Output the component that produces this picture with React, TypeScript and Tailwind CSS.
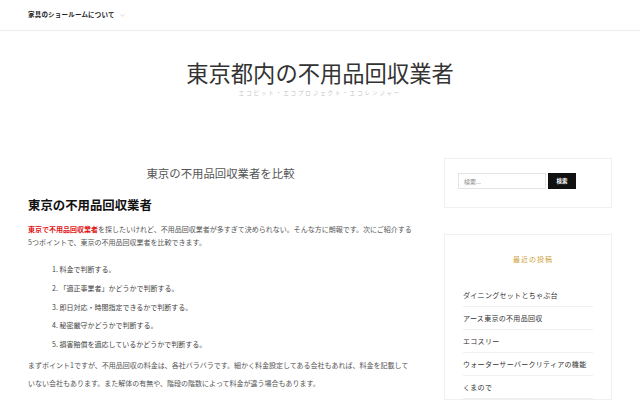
import { ChevronDown } from 'lucide-react';

const jp = { fontFamily: '"Noto Sans CJK JP", "Noto Sans", sans-serif' };

const points = [
  '1. 料金で判断する。',
  '2. 「適正事業者」かどうかで判断する。',
  '3. 即日対応・時間指定できるかで判断する。',
  '4. 秘密厳守かどうかで判断する。',
  '5. 損害賠償を適応しているかどうかで判断する。',
];

const recent = [
  'ダイニングセットとちゃぶ台',
  'アース東京の不用品回収',
  'エコスリー',
  'ウォーターサーバークリティアの機能',
  'くまので',
];

export default function App() {
  return (
    <div className="w-[640px] h-[400px] overflow-hidden bg-white text-[#333]" style={jp}>
      {/* top nav */}
      <header className="h-[31px] border-b border-[#ececec] flex items-center pl-[28px]">
        <span className="text-[6.5px] font-bold text-[#222] tracking-[0.2px]">家具のショールームについて</span>
        <ChevronDown className="w-[7px] h-[7px] ml-[4px] text-[#bbb]" strokeWidth={2} />
      </header>

      {/* site title */}
      <div className="flex flex-col items-center pt-[27px]">
        <h1 className="text-[22.3px] leading-[28px] text-[#333] font-normal">東京都内の不用品回収業者</h1>
        <p className="mt-[3px] text-[5.5px] leading-[8px] text-[#c4c4c4] tracking-[1.9px]">エコピット・エコプロジェクト・エコレンジャー</p>
      </div>

      <div className="flex pl-[28px] pt-[73px]">
        {/* main column */}
        <main className="w-[385px]">
          <h2 className="text-center text-[11.4px] leading-[16px] text-[#555] font-normal -mt-[5px]">東京の不用品回収業者を比較</h2>
          <h3 className="mt-[16px] text-[12.4px] leading-[16px] font-bold text-[#111]">東京の不用品回収業者</h3>
          <p className="mt-[10px] text-[7px] leading-[13px] text-[#555]">
            <span className="text-[#e01515] font-bold">東京で不用品回収業者</span>を探したいけれど、不用品回収業者が多すぎて決められない。そんな方に朗報です。次にご紹介する5つポイントで、東京の不用品回収業者を比較できます。
          </p>
          <ul className="mt-[14px] pl-[24px] flex flex-col gap-[6px]">
            {points.map((p) => (
              <li key={p} className="text-[7px] leading-[12.8px] text-[#444]">{p}</li>
            ))}
          </ul>
          <p className="mt-[5px] text-[7px] leading-[18px] text-[#555]">
            まずポイント1ですが、不用品回収の料金は、各社バラバラです。細かく料金設定してある会社もあれば、料金を記載していない会社もあります。また解体の有無や、階段の階数によって料金が違う場合もあります。
          </p>
        </main>

        {/* sidebar */}
        <aside className="ml-[31px] w-[168px] flex flex-col gap-[26px] -mt-[12px]">
          <div className="border border-[#f0f0f0] px-[13px] pt-[14px] pb-[18px]">
            <div className="flex">
              <div className="w-[88px] h-[16px] border border-[#e4e4e4] flex items-center pl-[5px] text-[6px] text-[#888]">検索...</div>
              <div className="ml-[2px] w-[28px] h-[16px] bg-[#111] flex items-center justify-center text-[5.5px] font-bold text-white">検索</div>
            </div>
          </div>
          <div className="border border-[#f0f0f0] px-[18px] pt-[19px]">
            <div className="text-center text-[7px] leading-[10px] text-[#cfa23a] tracking-[1px] ml-[10px]">最近の投稿</div>
            <ul className="mt-[20px]">
              {recent.map((r) => (
                <li key={r} className="h-[23px] flex items-center border-b border-[#f0f0f0] text-[7px] text-[#333] tracking-[0.3px]">{r}</li>
              ))}
            </ul>
          </div>
        </aside>
      </div>
    </div>
  );
}
